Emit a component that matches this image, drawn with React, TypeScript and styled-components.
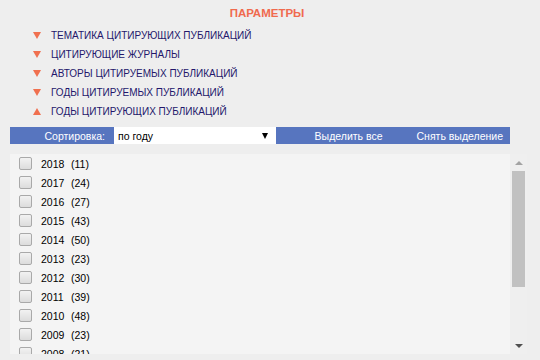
import React from "react";
import styled, { createGlobalStyle } from "styled-components";

const GlobalStyle = createGlobalStyle`
  html, body {
    margin: 0;
    padding: 0;
    background: #eeeeee;
  }
  body {
    font-family: "Liberation Sans", "DejaVu Sans", sans-serif;
    width: 540px;
    height: 360px;
    overflow: hidden;
  }
`;

const Page = styled.div`
  width: 540px;
  height: 360px;
  display: flex;
  flex-direction: column;
  padding: 0 10px;
  box-sizing: border-box;
`;

const Title = styled.div`
  height: 26px;
  line-height: 26px;
  text-align: center;
  color: #f06a4e;
  font-weight: bold;
  font-size: 11.5px;
  padding-right: 6px;
`;

const Params = styled.ul`
  list-style: none;
  margin: 0;
  padding: 0 0 0 23px;
  display: flex;
  flex-direction: column;
`;

const ParamRow = styled.li`
  height: 19px;
  display: flex;
  align-items: center;
  gap: 10px;
  font-size: 10px;
  color: #23176b;
  cursor: pointer;
`;

const Arrow = styled.span<{ $up?: boolean }>`
  width: 0;
  height: 0;
  border-left: 4px solid transparent;
  border-right: 4px solid transparent;
  ${(p) =>
    p.$up
      ? "border-bottom: 7px solid #f0704f;"
      : "border-top: 7px solid #f0704f;"}
`;

const Toolbar = styled.div`
  margin-top: 6px;
  height: 17px;
  width: 500px;
  background: #5775bf;
  display: flex;
  align-items: center;
  font-size: 10.5px;
  color: #ffffff;
`;

const SortLabel = styled.span`
  width: 104px;
  text-align: right;
  padding-right: 9px;
  box-sizing: border-box;
`;

const Select = styled.div`
  width: 162px;
  height: 17px;
  background: #ffffff;
  color: #000000;
  display: flex;
  align-items: center;
  justify-content: space-between;
  padding: 0 8px 0 4px;
  box-sizing: border-box;
`;

const SelectArrow = styled.span`
  width: 0;
  height: 0;
  border-left: 3.5px solid transparent;
  border-right: 3.5px solid transparent;
  border-top: 6px solid #000000;
`;

const Actions = styled.div`
  flex: 1;
  display: flex;
  justify-content: flex-end;
  gap: 34px;
  padding-right: 7px;
`;

const ActionButton = styled.span`
  cursor: pointer;
`;

const ListPanel = styled.div`
  margin-top: 10px;
  width: 517px;
  height: 200px;
  background: #f4f4f4;
  display: flex;
`;

const List = styled.div`
  flex: 1;
  overflow: hidden;
  padding: 0 0 0 9px;
  display: flex;
  flex-direction: column;
`;

const YearRow = styled.label`
  height: 19px;
  flex-shrink: 0;
  display: flex;
  align-items: center;
  font-size: 10.5px;
  color: #000000;
`;

const Box = styled.span`
  width: 11px;
  height: 11px;
  border: 1px solid #a9a9a9;
  border-radius: 2px;
  background: linear-gradient(#f2f2f2, #dcdcdc);
  margin-right: 9px;
`;

const Year = styled.span`
  width: 30px;
`;

const Scrollbar = styled.div`
  width: 17px;
  background: #efefef;
  display: flex;
  flex-direction: column;
  align-items: center;
`;

const ScrollButton = styled.div`
  height: 17px;
  display: flex;
  align-items: center;
  justify-content: center;
`;

const ScrollArrow = styled.span<{ $down?: boolean }>`
  width: 0;
  height: 0;
  border-left: 4px solid transparent;
  border-right: 4px solid transparent;
  ${(p) =>
    p.$down
      ? "border-top: 4px solid #505050;"
      : "border-bottom: 4px solid #a3a3a3;"}
`;

const ScrollTrack = styled.div`
  flex: 1;
  width: 13px;
`;

const Thumb = styled.div`
  width: 13px;
  height: 116px;
  background: #c1c1c1;
`;

const params = [
  { label: "ТЕМАТИКА ЦИТИРУЮЩИХ ПУБЛИКАЦИЙ" },
  { label: "ЦИТИРУЮЩИЕ ЖУРНАЛЫ" },
  { label: "АВТОРЫ ЦИТИРУЕМЫХ ПУБЛИКАЦИЙ" },
  { label: "ГОДЫ ЦИТИРУЕМЫХ ПУБЛИКАЦИЙ" },
  { label: "ГОДЫ ЦИТИРУЮЩИХ ПУБЛИКАЦИЙ", open: true },
];

const years: [number, number][] = [
  [2018, 11],
  [2017, 24],
  [2016, 27],
  [2015, 43],
  [2014, 50],
  [2013, 23],
  [2012, 30],
  [2011, 39],
  [2010, 48],
  [2009, 23],
  [2008, 21],
];

const App = () => {
  return (
    <>
      <GlobalStyle />
      <Page>
        <Title>ПАРАМЕТРЫ</Title>
        <Params>
          {params.map((p) => (
            <ParamRow key={p.label}>
              <Arrow $up={p.open} />
              {p.label}
            </ParamRow>
          ))}
        </Params>
        <Toolbar>
          <SortLabel>Сортировка:</SortLabel>
          <Select>
            по году
            <SelectArrow />
          </Select>
          <Actions>
            <ActionButton>Выделить все</ActionButton>
            <ActionButton>Снять выделение</ActionButton>
          </Actions>
        </Toolbar>
        <ListPanel>
          <List>
            {years.map(([y, n]) => (
              <YearRow key={y}>
                <Box />
                <Year>{y}</Year>({n})
              </YearRow>
            ))}
          </List>
          <Scrollbar>
            <ScrollButton>
              <ScrollArrow />
            </ScrollButton>
            <ScrollTrack>
              <Thumb />
            </ScrollTrack>
            <ScrollButton>
              <ScrollArrow $down />
            </ScrollButton>
          </Scrollbar>
        </ListPanel>
      </Page>
    </>
  );
};

export default App;
